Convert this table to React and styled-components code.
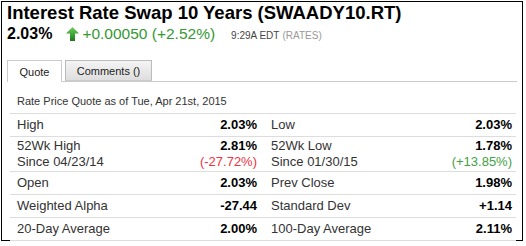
import React from 'react';
import styled, { createGlobalStyle } from 'styled-components';

const GlobalStyle = createGlobalStyle`
    body {
        margin: 0;
        background: #fff;
        font-family: "Liberation Sans", Arial, sans-serif;
    }
`;

const Frame = styled.div`
    box-sizing: border-box;
    width: 522px;
    height: 240px;
    margin: 1px 0 0 1px;
    border: 1px solid #000;
    padding: 0 5px 0 5px;
    background: #fff;
`;

const Title = styled.h1`
    margin: 0;
    font-size: 18.5px;
    line-height: 22px;
    font-weight: bold;
    color: #000;
`;

const PriceLine = styled.div`
    display: flex;
    align-items: baseline;
    margin-top: 1px;
    height: 22px;
`;

const Last = styled.span`
    font-size: 16px;
    font-weight: bold;
    color: #000;
    margin-right: 14px;
`;

const Change = styled.span`
    display: flex;
    align-items: baseline;
    font-size: 15.5px;
    color: #339933;
    margin-right: 16px;

    svg {
        margin-right: 3px;
        align-self: center;
    }
`;

const Stamp = styled.span`
    font-size: 10px;
    color: ${(p) => (p.muted ? '#999' : '#444')};
    margin-right: 3px;
`;

const TabBar = styled.div`
    display: flex;
    gap: 3px;
    margin-top: 13px;
    border-bottom: 1px solid #ccc;
    height: 21px;
`;

const Tab = styled.div`
    box-sizing: border-box;
    width: ${(p) => p.w}px;
    height: ${(p) => (p.active ? 22 : 21)}px;
    border: 1px solid ${(p) => (p.active ? '#ccc' : '#bbb')};
    border-bottom: ${(p) => (p.active ? 'none' : '1px solid #ccc')};
    background: ${(p) => (p.active ? '#fff' : 'linear-gradient(#f4f4f4, #dedede)')};
    font-size: 11px;
    color: #222;
    display: flex;
    align-items: center;
    justify-content: center;
`;

const Table = styled.div`
    margin: 0 1px 0 3px;
`;

const AsOf = styled.div`
    font-size: 11px;
    color: #333;
    padding: 13px 0 5px 7px;
    line-height: 13px;
`;

const Row = styled.div`
    display: grid;
    grid-template-columns: 253px 1fr;
    border-top: 1px solid #ddd;
    padding: 1px 0;
    line-height: ${(p) => (p.double ? 16 : 20)}px;
    font-size: 13px;
`;

const Half = styled.div`
    display: flex;
    justify-content: space-between;
    padding: ${(p) => (p.right ? '0 4px 0 8px' : '0 6px 0 7px')};
`;

const Labels = styled.div`
    display: flex;
    flex-direction: column;
    color: #333;
`;

const Values = styled.div`
    display: flex;
    flex-direction: column;
    align-items: flex-end;
`;

const Value = styled.span`
    font-weight: bold;
    color: #000;
`;

const Delta = styled.span`
    color: ${(p) => (p.up ? '#44a044' : '#ee3344')};
`;

const UpArrow = () => (
    <svg width="13" height="14" viewBox="0 0 13 14">
        <defs>
            <linearGradient id="ga" x1="0" y1="0" x2="0" y2="1">
                <stop offset="0" stopColor="#6fcf5a" />
                <stop offset="1" stopColor="#1d7a1d" />
            </linearGradient>
        </defs>
        <polygon points="6.5,0 13,6.5 9,6.5 9,14 4,14 4,6.5 0,6.5" fill="url(#ga)" />
    </svg>
);

const stats = [
    [{ label: 'High', value: '2.03%' }, { label: 'Low', value: '2.03%' }],
    [
        { label: '52Wk High', value: '2.81%', since: 'Since 04/23/14', delta: '(-27.72%)' },
        { label: '52Wk Low', value: '1.78%', since: 'Since 01/30/15', delta: '(+13.85%)', up: true },
    ],
    [{ label: 'Open', value: '2.03%' }, { label: 'Prev Close', value: '1.98%' }],
    [{ label: 'Weighted Alpha', value: '-27.44' }, { label: 'Standard Dev', value: '+1.14' }],
    [{ label: '20-Day Average', value: '2.00%' }, { label: '100-Day Average', value: '2.11%' }],
];

const StatHalf = ({ item, right }) => (
    <Half right={right}>
        <Labels>
            <span>{item.label}</span>
            {item.since && <span>{item.since}</span>}
        </Labels>
        <Values>
            <Value>{item.value}</Value>
            {item.delta && <Delta up={item.up}>{item.delta}</Delta>}
        </Values>
    </Half>
);

const App = () => (
    <>
        <GlobalStyle />
        <Frame>
            <Title>Interest Rate Swap 10 Years (SWAADY10.RT)</Title>
            <PriceLine>
                <Last>2.03%</Last>
                <Change>
                    <UpArrow />
                    +0.00050 (+2.52%)
                </Change>
                <Stamp>9:29A EDT</Stamp>
                <Stamp muted>(RATES)</Stamp>
            </PriceLine>
            <TabBar>
                <Tab active w={55}>Quote</Tab>
                <Tab w={87}>Comments ()</Tab>
            </TabBar>
            <Table>
                <AsOf>Rate Price Quote as of Tue, Apr 21st, 2015</AsOf>
                {stats.map((row, i) => (
                    <Row key={i} double={!!row[0].since}>
                        <StatHalf item={row[0]} />
                        <StatHalf item={row[1]} right />
                    </Row>
                ))}
                <Row />
            </Table>
        </Frame>
    </>
);

export default App;
